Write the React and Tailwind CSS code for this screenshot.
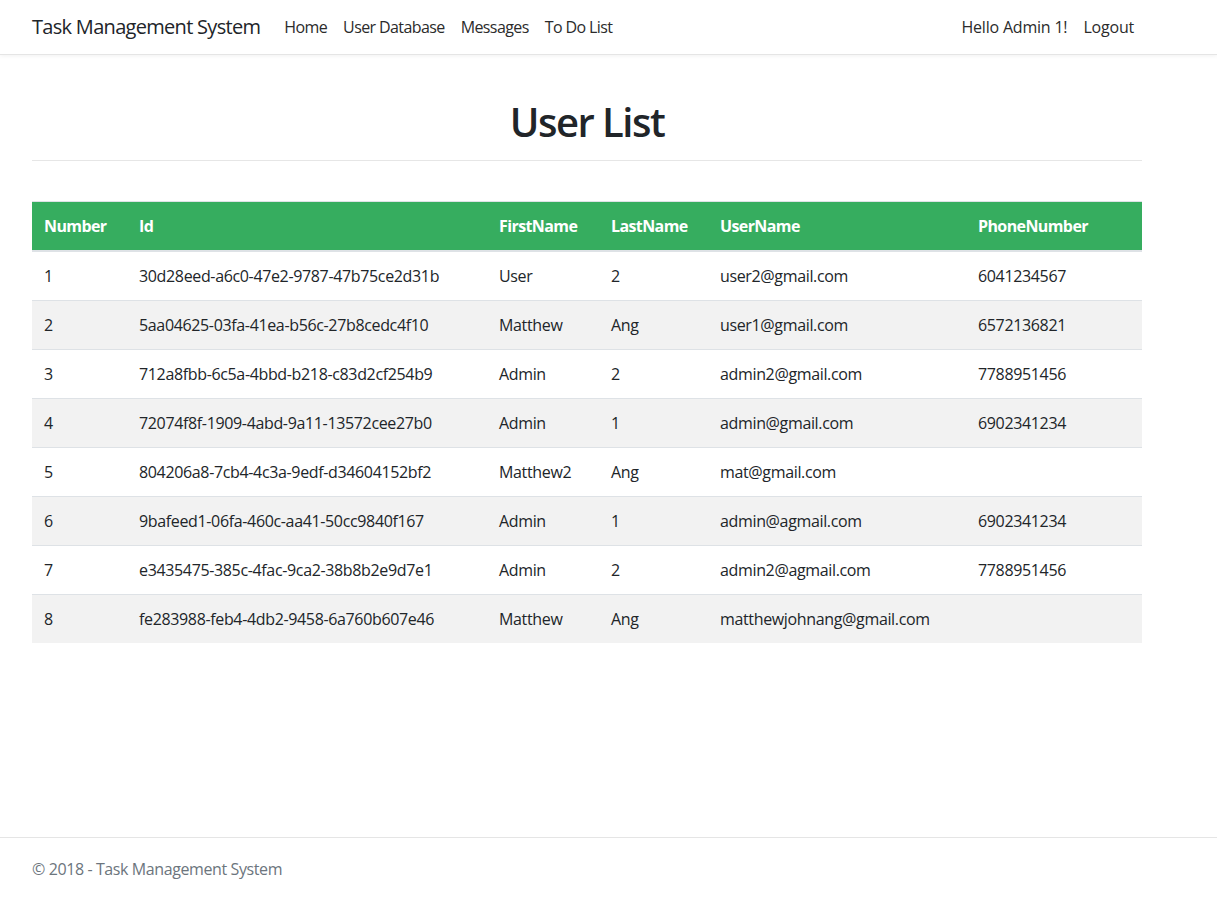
import React from 'react';

const users = [
    { id: '30d28eed-a6c0-47e2-9787-47b75ce2d31b', first: 'User', last: '2', userName: 'user2@gmail.com', phone: '6041234567' },
    { id: '5aa04625-03fa-41ea-b56c-27b8cedc4f10', first: 'Matthew', last: 'Ang', userName: 'user1@gmail.com', phone: '6572136821' },
    { id: '712a8fbb-6c5a-4bbd-b218-c83d2cf254b9', first: 'Admin', last: '2', userName: 'admin2@gmail.com', phone: '7788951456' },
    { id: '72074f8f-1909-4abd-9a11-13572cee27b0', first: 'Admin', last: '1', userName: 'admin@gmail.com', phone: '6902341234' },
    { id: '804206a8-7cb4-4c3a-9edf-d34604152bf2', first: 'Matthew2', last: 'Ang', userName: 'mat@gmail.com', phone: '' },
    { id: '9bafeed1-06fa-460c-aa41-50cc9840f167', first: 'Admin', last: '1', userName: 'admin@agmail.com', phone: '6902341234' },
    { id: 'e3435475-385c-4fac-9ca2-38b8b2e9d7e1', first: 'Admin', last: '2', userName: 'admin2@agmail.com', phone: '7788951456' },
    { id: 'fe283988-feb4-4db2-9458-6a760b607e46', first: 'Matthew', last: 'Ang', userName: 'matthewjohnang@gmail.com', phone: '' },
];

const App = () => {
    return (
        <div className="min-h-[897px] flex flex-col bg-white text-[#212529] font-['Open_Sans','Noto_Sans',sans-serif]">
            {/* Navbar */}
            <nav className="h-[55px] border-b border-[#e5e5e5] shadow-[0_1px_4px_rgba(0,0,0,0.06)] bg-white">
                <div className="w-[1110px] ml-[32px] h-full flex items-center justify-between">
                    <div className="flex items-center">
                        <span className="text-[20px] leading-[30px] mr-4 tracking-[-0.7px] text-[#212529]">Task Management System</span>
                        <ul className="flex text-[16px] tracking-[-0.6px] text-[#2b2b2b]">
                            <li className="px-2">Home</li>
                            <li className="px-2">User Database</li>
                            <li className="px-2">Messages</li>
                            <li className="px-2">To Do List</li>
                        </ul>
                    </div>
                    <ul className="flex text-[16px] tracking-[-0.2px] text-[#2b2b2b]">
                        <li className="px-2">Hello Admin 1!</li>
                        <li className="px-2">Logout</li>
                    </ul>
                </div>
            </nav>

            {/* Main */}
            <main className="flex-1 w-[1110px] ml-[32px] pt-[43px]">
                <h1 className="text-center text-[40px] leading-[48px] font-semibold tracking-[-1.5px]">User List</h1>
                <hr className="mt-[14px] border-t border-[#e6e6e6]" />

                <table className="mt-[40px] w-[1110px] table-fixed border-collapse text-[16px] leading-6 tracking-[-0.35px]">
                    <thead>
                        <tr className="bg-[#36ad5f] text-white text-left tracking-[-0.6px]">
                            <th className="w-[95px] px-3 py-3 border-t border-[#dee2e6] border-b-2 font-bold">Number</th>
                            <th className="w-[360px] px-3 py-3 border-t border-[#dee2e6] border-b-2 font-bold">Id</th>
                            <th className="w-[112px] px-3 py-3 border-t border-[#dee2e6] border-b-2 font-bold">FirstName</th>
                            <th className="w-[109px] px-3 py-3 border-t border-[#dee2e6] border-b-2 font-bold">LastName</th>
                            <th className="w-[258px] px-3 py-3 border-t border-[#dee2e6] border-b-2 font-bold">UserName</th>
                            <th className="w-[176px] px-3 py-3 border-t border-[#dee2e6] border-b-2 font-bold">PhoneNumber</th>
                        </tr>
                    </thead>
                    <tbody>
                        {users.map((u, i) => (
                            <tr key={u.id} className={i % 2 === 1 ? 'bg-[#f2f2f2]' : 'bg-white'}>
                                <td className="px-3 py-3 border-t border-[#dee2e6]">{i + 1}</td>
                                <td className="px-3 py-3 border-t border-[#dee2e6] whitespace-nowrap">{u.id}</td>
                                <td className="px-3 py-3 border-t border-[#dee2e6]">{u.first}</td>
                                <td className="px-3 py-3 border-t border-[#dee2e6]">{u.last}</td>
                                <td className="px-3 py-3 border-t border-[#dee2e6]">{u.userName}</td>
                                <td className="px-3 py-3 border-t border-[#dee2e6]">{u.phone}</td>
                            </tr>
                        ))}
                    </tbody>
                </table>
            </main>

            {/* Footer */}
            <footer className="h-[60px] border-t border-[#e5e5e5]">
                <div className="ml-[32px] pt-[19px] text-[16px] leading-6 tracking-[-0.4px] text-[#6c757d]">© 2018 - Task Management System</div>
            </footer>
        </div>
    );
};

export default App;
